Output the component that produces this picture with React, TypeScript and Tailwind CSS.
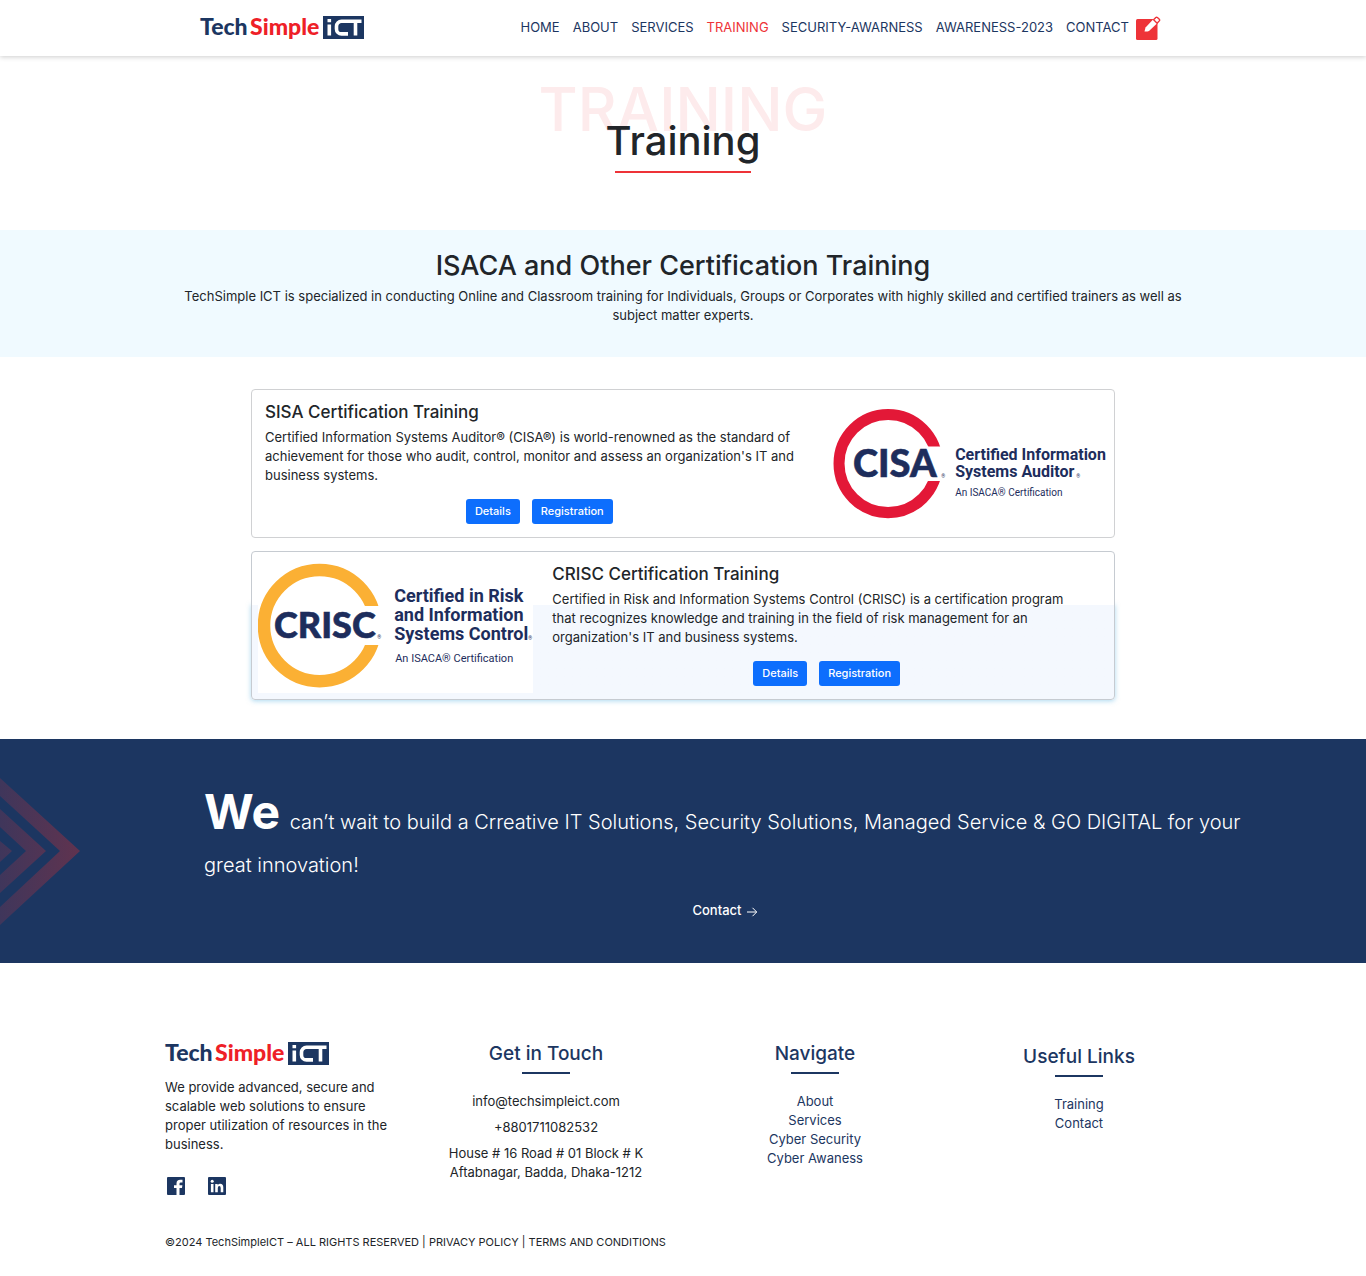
import React from "react";

const navItems = ["HOME", "ABOUT", "SERVICES", "TRAINING", "SECURITY-AWARNESS", "AWARENESS-2023", "CONTACT"];

function Brand() {
  return (
    <svg width="165" height="26" viewBox="0 0 165 26" role="img" aria-label="TechSimple ICT" className="block overflow-visible">
      <g fontFamily="Lato" fontWeight="900" fontSize="23">
        <text x="0" y="19" fill="#1c3661">Tech</text>
        <text x="50" y="19" fill="#ee2027">Simple</text>
      </g>
      <rect x="123" y="0" width="41" height="23" fill="#1c3661" />
      <g fill="none" stroke="#fff" strokeWidth="3.6">
        <path d="M129.3 8.5V19.5M129.3 3V6.2" />
        <path d="M148 5.200H141.500a5 5 0 0 0-5 5v2.700a5 5 0 0 0 5 5H148" />
        <path d="M148 5.200H161.500M155.500 5.200V19.500" />
      </g>
    </svg>
  );
}

function CisaLogo() {
  return (
    <svg viewBox="0 0 275 110" role="img" aria-label="CISA Certified Information Systems Auditor" className="block w-full">
      <circle cx="55" cy="55.500" r="49" fill="none" stroke="#e31837" strokeWidth="11" />
      <path d="M80 38.500H114V73H80Z" fill="#fff" />
      <g fill="#1d2d5c">
        <text x="20" y="69" fontFamily="Lato" fontWeight="900" fontSize="38" stroke="#1d2d5c" strokeWidth="0.6">CISA</text>
        <g fontFamily="Roboto" fontWeight="700" fontSize="16">
          <text x="122" y="52">Certified Information</text>
          <text x="122" y="69">Systems Auditor</text>
        </g>
        <text x="122" y="88" fontFamily="Roboto" fontSize="10">An ISACA® Certification</text>
        <text x="108" y="70" fontFamily="Roboto" fontSize="5">®</text>
        <text x="243" y="70" fontFamily="Roboto" fontSize="5">®</text>
      </g>
    </svg>
  );
}

function CriscLogo() {
  return (
    <svg viewBox="0 0 275 134" role="img" aria-label="CRISC Certified in Risk and Information Systems Control" className="block w-full bg-white">
      <circle cx="61.500" cy="67.500" r="55.500" fill="none" stroke="#fbb034" strokeWidth="12.500" />
      <path d="M92 48H126V87H92Z" fill="#fff" />
      <g fill="#1d2d5c">
        <text x="16" y="80" fontFamily="Lato" fontWeight="900" fontSize="36" stroke="#1d2d5c" strokeWidth="0.6">CRISC</text>
        <g fontFamily="Roboto" fontWeight="700" fontSize="18">
          <text x="136" y="44">Certified in Risk</text>
          <text x="136" y="63">and Information</text>
          <text x="136" y="82">Systems Control</text>
        </g>
        <text x="137" y="104" fontFamily="Roboto" fontSize="11">An ISACA® Certification</text>
        <text x="119" y="81" fontFamily="Roboto" fontSize="5">®</text>
        <text x="270" y="82" fontFamily="Roboto" fontSize="5">®</text>
      </g>
    </svg>
  );
}

function CourseText({ title, children }: { title: string; children: React.ReactNode }) {
  return (
    <div className="col-span-2 px-[13px] pb-[13px] pt-3">
      <h3 className="text-[17px] font-medium leading-5">{title}</h3>
      <p className="mt-1.5 max-w-[536px] leading-[19px]">{children}</p>
      <div className="mt-3.5 flex justify-center gap-3">
        <button className="h-[25px] rounded-[3px] bg-[#0d6efd] px-[9px] text-[11px] font-medium text-white">Details</button>
        <button className="h-[25px] rounded-[3px] bg-[#0d6efd] px-[9px] text-[11px] font-medium text-white">Registration</button>
      </div>
    </div>
  );
}

function FooterTitle({ children }: { children: React.ReactNode }) {
  return (
    <>
      <h4 className="text-[19px] font-medium leading-6 text-[#1c3661]">{children}</h4>
      <div className="mx-auto mt-1.5 h-0.5 w-12 bg-[#1c3661]" />
    </>
  );
}

export default function App() {
  return (
    <div className="min-h-screen bg-white font-['Inter',sans-serif] text-[13px] text-[#212529]">
      <header className="relative h-14 bg-white shadow-[0_1px_5px_rgba(0,0,0,0.2)]">
        <div className="mx-auto flex h-full max-w-[966px] items-start justify-between pr-[5px] pt-4">
          <a href="#home"><Brand /></a>
          <nav className="flex gap-[13px] leading-[22px] text-[#1c3661]">
            {navItems.map((n) => (
              <a key={n} href={"#" + n.toLowerCase()} className={n === "TRAINING" ? "text-[#ee3338]" : ""}>{n}</a>
            ))}
            <a href="#edit" aria-label="Register" className="-ml-1.5">
              <svg width="25" height="24" viewBox="0 0 25 24">
                <rect x="0" y="3" width="21.500" height="21" rx="1.500" fill="#ee3338" />
                <path d="M8.500 15.500L9.500 11.500L17.500 3L21.500 7L13 15Q11 15.800 8.500 15.500Z" fill="#fff" />
                <path d="M17.600 3.800L19.800 1.500Q20.600.8 21.400 1.500L23.300 3.300Q24 4.100 23.300 4.900L21.100 7.200Z" fill="#fff" stroke="#ee3338" strokeWidth="1.400" />
              </svg>
            </a>
          </nav>
        </div>
      </header>

      <main>
        <section className="flex h-[174px] flex-col items-center pt-[18px] text-center">
          <div aria-hidden="true" className="text-[60px] font-medium leading-[70px] text-[#fdebec]">TRAINING</div>
          <h1 className="relative -mt-7 text-[40px] font-medium leading-[50px]">Training</h1>
          <div className="mt-[5px] h-0.5 w-[136px] bg-[#ee3338]" />
        </section>

        <section className="bg-[#f0faff] px-40 pb-8 pt-5 text-center">
          <h2 className="text-[27px] font-medium leading-8">ISACA and Other Certification Training</h2>
          <p className="mx-auto mt-[5px] max-w-[1036px] leading-[19px]">
            TechSimple ICT is specialized in conducting Online and Classroom training for Individuals, Groups or Corporates with highly skilled and certified trainers as well as subject matter experts.
          </p>
        </section>

        <section className="mx-auto flex max-w-[864px] flex-col gap-[13px] pb-[39px] pt-8">
          <article className="grid grid-cols-3 items-center rounded border border-[#d0d1d3] bg-white">
            <CourseText title="SISA Certification Training">
              Certified Information Systems Auditor® (CISA®) is world-renowned as the standard of achievement for those who audit, control, monitor and assess an organization's IT and business systems.
            </CourseText>
            <div className="px-1.5"><CisaLogo /></div>
          </article>
          <div className="relative">
            <div className="absolute inset-x-0 bottom-0 top-[53px] rounded-b shadow-[0_1px_5px_rgba(90,180,225,0.5)]" />
            <article className="relative grid grid-cols-3 items-center rounded border border-[#c6cbd1] bg-linear-to-b from-white from-[36%] to-[#f4f8fe] to-[36%]">
              <div className="px-1.5"><CriscLogo /></div>
              <CourseText title="CRISC Certification Training">
                Certified in Risk and Information Systems Control (CRISC) is a certification program<br />that recognizes knowledge and training in the field of risk management for an<br />organization's IT and business systems.
              </CourseText>
            </article>
          </div>
        </section>

        <section className="relative bg-[#1c3661] pb-[43px] pl-[204px] pr-[120px] pt-[51px] text-white">
          <svg width="80" height="147" viewBox="0 0 80 147" className="absolute left-0 top-[39px]" aria-hidden="true">
            <defs>
              <linearGradient id="chevrons" gradientUnits="userSpaceOnUse" x1="0" y1="0" x2="80" y2="0">
                <stop offset="0" stopColor="#3f365b" />
                <stop offset="1" stopColor="#60334f" />
              </linearGradient>
            </defs>
            <g fill="url(#chevrons)">
              <path d="M0 0L80 73L0 147V129L60 73L0 18Z" />
              <path d="M0 31L46 73L0 115V97L26 73L0 49Z" />
              <path d="M0 63L12 73L0 84Z" />
            </g>
          </svg>
          <p className="text-[20px] font-light leading-[43px]">
            <span className="mr-1 text-[48px] font-bold">We</span> can’t wait to build a Crreative IT Solutions, Security Solutions, Managed Service &amp; GO DIGITAL for your great innovation!
          </p>
          <div className="mt-[13px] flex justify-center">
            <a href="#contact" className="flex items-center gap-1 font-medium leading-[20px]">
              Contact
              <svg width="12" height="12" viewBox="0 0 12 12" fill="none" stroke="#fff" className="mt-1">
                <path d="M1 6H10.500M6.500 1.800L10.700 6L6.500 10.200" />
              </svg>
            </a>
          </div>
        </section>
      </main>

      <footer className="pb-6 pl-[165px] pr-[158px] pt-[79px]">
        <div className="grid grid-cols-[247fr_268fr_270fr_258fr]">
          <div>
            <Brand />
            <p className="mt-2.5 max-w-[232px] leading-[19px]">We provide advanced, secure and scalable web solutions to ensure proper utilization of resources in the business.</p>
            <div className="mt-[23px] flex gap-[23px] pl-0.5">
              <a href="#facebook" aria-label="Facebook">
                <svg width="18" height="18" viewBox="0 0 18 18">
                  <rect width="18" height="18" rx="1" fill="#1c3661" />
                  <path d="M9.500 18V11H7V8.300H9.500V6.500Q9.500 2.800 13.300 2.800H15.500V5.500H13.800Q12.500 5.500 12.500 6.800V8.300H15.400L15 11H12.500V18Z" fill="#fff" />
                </svg>
              </a>
              <a href="#linkedin" aria-label="LinkedIn">
                <svg width="18" height="18" viewBox="0 0 18 18">
                  <rect width="18" height="18" rx="1" fill="#1c3661" />
                  <circle cx="4.200" cy="4.200" r="1.500" fill="#fff" />
                  <path d="M2.900 7H5.500V15.300H2.900ZM7.200 7H9.700V8.200Q10.500 6.800 12.200 6.800Q15.300 6.800 15.300 10.400V15.300H12.700V11Q12.700 9 11.300 9Q9.800 9 9.800 11V15.300H7.200Z" fill="#fff" />
                </svg>
              </a>
            </div>
          </div>
          <div className="text-center leading-[19px]">
            <FooterTitle>Get in Touch</FooterTitle>
            <p className="mt-[18px]">info@techsimpleict.com</p>
            <p className="mt-[7px]">+8801711082532</p>
            <p className="mt-[7px]">House # 16 Road # 01 Block # K<br />Aftabnagar, Badda, Dhaka-1212</p>
          </div>
          <div className="text-center leading-[19px] text-[#1c3661]">
            <FooterTitle>Navigate</FooterTitle>
            <ul className="mt-[18px]">
              <li><a href="#about">About</a></li>
              <li><a href="#services">Services</a></li>
              <li><a href="#security">Cyber Security</a></li>
              <li><a href="#awareness">Cyber Awaness</a></li>
            </ul>
          </div>
          <div className="pt-[3px] text-center leading-[19px] text-[#1c3661]">
            <FooterTitle>Useful Links</FooterTitle>
            <ul className="mt-[18px]">
              <li><a href="#training">Training</a></li>
              <li><a href="#contact">Contact</a></li>
            </ul>
          </div>
        </div>
        <p className="mt-[38px] text-[11px] leading-[18px]">
          ©2024 TechSimpleICT – ALL RIGHTS RESERVED | <a href="#privacy">PRIVACY POLICY</a> | <a href="#terms">TERMS AND CONDITIONS</a>
        </p>
      </footer>
    </div>
  );
}
